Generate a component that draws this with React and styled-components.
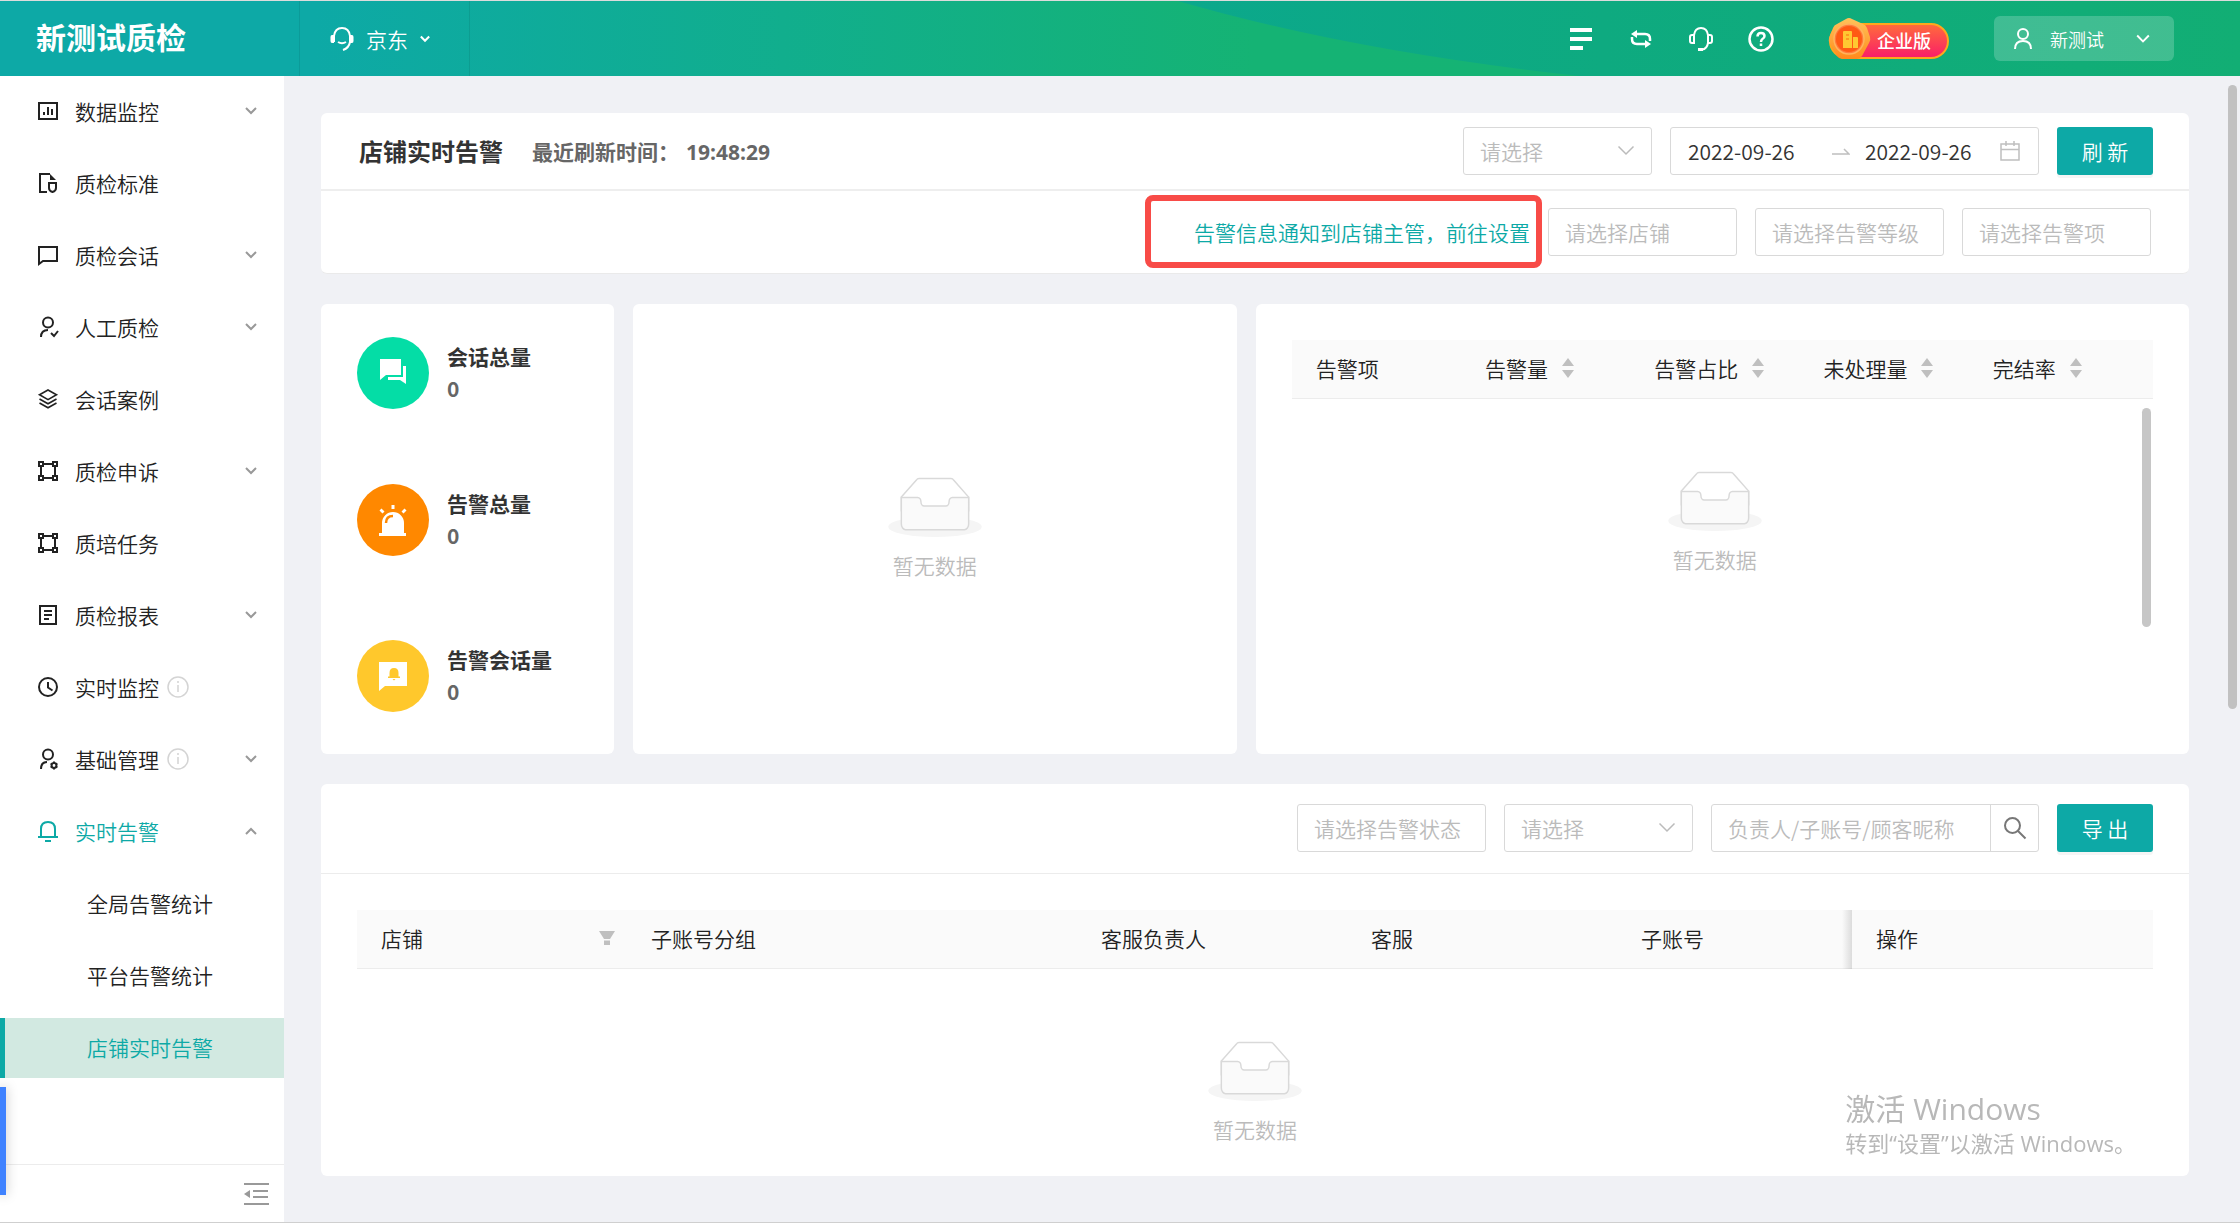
import React from "react";
import styled, { createGlobalStyle, css } from "styled-components";

const menuItems = [
  { icon: "chart", label: "数据监控", arrow: "down" },
  { icon: "file", label: "质检标准" },
  { icon: "chat", label: "质检会话", arrow: "down" },
  { icon: "userCheck", label: "人工质检", arrow: "down" },
  { icon: "layers", label: "会话案例" },
  { icon: "frame", label: "质检申诉", arrow: "down" },
  { icon: "frame", label: "质培任务" },
  { icon: "report", label: "质检报表", arrow: "down" },
  { icon: "clock", label: "实时监控", info: true },
  { icon: "userGear", label: "基础管理", info: true, arrow: "down" },
  { icon: "bell", label: "实时告警", arrow: "up", open: true },
];

const subItems = ["全局告警统计", "平台告警统计", "店铺实时告警"];

const stats = [
  { icon: "talk", label: "会话总量", value: 0, color: "#04dda6" },
  { icon: "siren", label: "告警总量", value: 0, color: "#ff8800" },
  { icon: "notice", label: "告警会话量", value: 0, color: "#ffc82c" },
];

const alarmColumns = ["告警项", "告警量", "告警占比", "未处理量", "完结率"];

const detailColumns = [
  { label: "店铺", width: 270, filter: true },
  { label: "子账号分组", width: 450 },
  { label: "客服负责人", width: 270 },
  { label: "客服", width: 270 },
  { label: "子账号", width: 235 },
];

const menuIcons = {
  chart: <path d="M1 2h18v16H1zM6 14v-3M10 14V6M14 14V8" />,
  file: (
    <>
      <path d="M9 19H2V1h10" />
      <path d="M12 1v6h6z" fill="currentColor" stroke="none" />
      <path d="M11 10h7v5q0 3-3.500 4-3.500-1-3.500-4z" />
    </>
  ),
  chat: <path d="M1 2h18v14H5l-4 3z" />,
  userCheck: (
    <>
      <circle cx="10" cy="5.500" r="5" />
      <path d="M3 20q0-7 7-7M13 16l3 3 4-5" />
    </>
  ),
  layers: (
    <path strokeWidth="1.600" d="M10 1l8.500 4.800L10 10.600 1.500 5.800zM1.500 10L10 14.800 18.500 10M1.500 14L10 18.800 18.500 14" />
  ),
  frame: (
    <path d="M1 1h4v4H1zM15 1h4v4h-4zM1 15h4v4H1zM15 15h4v4h-4zM5 3h10M5 17h10M3 5v10M17 5v10" />
  ),
  report: <path d="M2 1h16v18H2zM6 6h8M6 10h8M6 14h5" />,
  clock: (
    <>
      <circle cx="10" cy="10" r="9" />
      <path d="M10 5v5.500l4.500 3" />
    </>
  ),
  userGear: (
    <>
      <circle cx="10" cy="5.500" r="5" />
      <path d="M3 20q0-7 6-7" />
      <circle cx="16" cy="16.500" r="2.400" />
      <path d="M16 12.500v1.500M16 19v1.500M12.600 14.500l1.200.700M18.200 17.800l1.200.700M12.600 18.500l1.200-.700M18.200 15.200l1.200-.700" />
    </>
  ),
  bell: <path d="M0 16h20M3 16V8q0-7 7-7t7 7v8M7 20h6" />,
};

const statIcons = {
  talk: (
    <>
      <path d="M1 1h21v16H7l-6 5z" />
      <path d="M24 8h3v18l-6-4H9v-3h15z" />
    </>
  ),
  siren: (
    <>
      <path d="M3 28V18a11 11 0 0 1 22 0v10h2v3H0v-3z" />
      <path d="M12.500 0h3v4h-3zM.5 5.500l2-2 3 3-2 2zM27.500 5.500l-2-2-3 3 2 2z" />
      <path d="M7 18q0-7 7-7" fill="none" stroke="#ff8800" strokeWidth="2.500" />
    </>
  ),
  notice: (
    <>
      <path d="M0 1h28v24H6l-6 5z" />
      <path d="M9 17h12v-1.500h-1.500V12q0-5-4.500-5t-4.500 5v3.500H9zM13.500 18h3l-1.500 1.500z" fill="#ffc82c" />
    </>
  ),
};

function Chevron({ up, size = 12, weight = 2 }) {
  return (
    <svg width={size} height={size} viewBox="0 0 12 12" fill="none" stroke="currentColor" strokeWidth={weight} aria-hidden="true">
      <path d={up ? "M1 9l5-5 5 5" : "M1 3l5 5 5-5"} />
    </svg>
  );
}

function Empty({ inTable }) {
  return (
    <EmptyBox $inTable={inTable}>
      <svg width="94" height="60" viewBox="0 0 64 41" aria-hidden="true">
        <g transform="translate(0 1)" fill="none" fillRule="evenodd">
          <ellipse fill="#f5f5f5" cx="32" cy="33" rx="32" ry="7" />
          <g fillRule="nonzero" stroke="#d9d9d9">
            <path d="M55 12.760L44.854 1.258C44.367.474 43.656 0 42.907 0H21.093c-.749 0-1.460.474-1.947 1.257L9 12.761V22h46v-9.240z" fill="#fff" />
            <path d="M41.613 15.931c0-1.605.994-2.930 2.227-2.931H55v18.137C55 33.260 53.680 35 52.050 35h-40.100C10.320 35 9 33.259 9 31.137V13h11.160c1.233 0 2.227 1.323 2.227 2.928v.022c0 1.605 1.005 2.901 2.237 2.901h14.752c1.232 0 2.237-1.308 2.237-2.913v-.007z" fill="#fafafa" />
          </g>
        </g>
      </svg>
      <EmptyText>暂无数据</EmptyText>
    </EmptyBox>
  );
}

function Picker({ label, arrow }) {
  return (
    <PickerBox>
      <PickerSelect aria-label={label} defaultValue="">
        <option value="">{label}</option>
      </PickerSelect>
      {arrow && (
        <PickerArrow>
          <Chevron size={18} weight={1} />
        </PickerArrow>
      )}
    </PickerBox>
  );
}

function Header() {
  return (
    <TopBar>
      <TopBarArt viewBox="0 0 2240 75" preserveAspectRatio="none" aria-hidden="true">
        <defs>
          <linearGradient id="wave" x1="0" x2="1" y1="0" y2="0">
            <stop offset="0" stopColor="#0ba88c" />
            <stop offset="0.4" stopColor="#0eaa80" />
            <stop offset="1" stopColor="#12ae74" />
          </linearGradient>
        </defs>
        <path d="M1178 0Q1350 50 1580 75H2240V0z" fill="url(#wave)" />
      </TopBarArt>
      <Brand>新测试质检</Brand>
      <Platform>
        <svg width="24" height="24" viewBox="0 0 24 24" fill="none" stroke="currentColor" strokeWidth="2" aria-hidden="true">
          <path d="M4 15V9q1-8 8-8t8 8v6q-1 6-7 8M8 15q4 2.500 8 0" />
          <path d="M4 8v8H2q-1.500 0-1.500-2v-4Q.5 8 2 8zM20 8v8h2q1.500 0 1.500-2v-4q0-2-1.500-2z" fill="currentColor" stroke="none" />
        </svg>
        京东
        <Chevron size={10} weight={2.5} />
      </Platform>
      <Tools>
        <ToolButton aria-label="列表">
          <svg width="22" height="24" viewBox="0 0 22 24" stroke="currentColor" strokeWidth="4" aria-hidden="true">
            <path d="M0 3h22M0 12h22M0 21h13" />
          </svg>
        </ToolButton>
        <ToolButton aria-label="切换">
          <svg width="22" height="20" viewBox="0 0 22 20" fill="none" stroke="currentColor" strokeWidth="2.500" aria-hidden="true">
            <path d="M4 5h11q5 0 5 5v2M18 15H7q-5 0-5-5V8" />
            <path d="M7 1v8L1 5zM15 11v8l6-4z" fill="currentColor" stroke="none" />
          </svg>
        </ToolButton>
        <ToolButton aria-label="客服">
          <svg width="24" height="24" viewBox="0 0 24 24" fill="none" stroke="currentColor" strokeWidth="2" aria-hidden="true">
            <path d="M5 8q1-7 7-7t7 7v8q-1 6-6 6.500" />
            <path d="M5 8v8H3q-2 0-2-2v-4q0-2 2-2zM19 8v8h2q2 0 2-2v-4q0-2-2-2z" />
            <path d="M9 22.500h5" strokeWidth="3" />
          </svg>
        </ToolButton>
        <ToolButton aria-label="帮助">
          <svg width="26" height="26" viewBox="0 0 26 26" fill="none" stroke="currentColor" strokeWidth="2.500" aria-hidden="true">
            <circle cx="13" cy="13" r="11.500" />
            <path d="M9.500 10.500q0-3.500 3.500-3.500t3.500 3q0 2-2 3-1.500 1-1.500 3M13 17.500v2.500" />
          </svg>
        </ToolButton>
      </Tools>
      <Edition>
        <EditionMedal viewBox="0 0 44 44" aria-hidden="true">
          <defs>
            <linearGradient id="medal" x1="0" x2="0" y1="0" y2="1">
              <stop offset="0" stopColor="#ffc35a" />
              <stop offset="1" stopColor="#ff8a1c" />
            </linearGradient>
          </defs>
          <path d="M18 2q3-2 6 0l11 5q3 1 4 4l3 9q1 3-1 6l-7 13q-2 3-5 3H14q-3 0-5-3L2 27q-2-3-1-6l4-10q1-3 4-4z" fill="url(#medal)" />
          <circle cx="21" cy="22" r="15" fill="#ff7a3c" stroke="#ffb45c" strokeWidth="1.500" />
          <circle cx="21" cy="22" r="13" fill="#ff5a14" />
          <path d="M15 15q0-1 1-1h7q1 0 1 1v16h-9zM25 20h4q1 0 1 1v10h-5z" fill="#ffc832" />
          <path d="M18 18h3M18 22h3" stroke="#ff8a1c" strokeWidth="1.500" />
        </EditionMedal>
        企业版
      </Edition>
      <Account>
        <svg width="18" height="22" viewBox="0 0 18 22" fill="none" stroke="currentColor" strokeWidth="2" aria-hidden="true">
          <circle cx="9" cy="6" r="5" />
          <path d="M1 21q0-8 8-8t8 8" />
        </svg>
        <AccountName>新测试</AccountName>
        <Chevron size={14} weight={1.6} />
      </Account>
    </TopBar>
  );
}

function Sidebar() {
  return (
    <Side>
      <Nav>
        {menuItems.map((item) => (
          <NavItem key={item.label} href="#" $open={item.open}>
            <NavIcon viewBox="0 0 20 20">{menuIcons[item.icon]}</NavIcon>
            {item.label}
            {item.info && (
              <InfoIcon viewBox="0 0 22 22">
                <circle cx="11" cy="11" r="10" />
                <path d="M11 9v7M11 5v2" />
              </InfoIcon>
            )}
            {item.arrow && (
              <NavArrow>
                <Chevron up={item.arrow === "up"} />
              </NavArrow>
            )}
          </NavItem>
        ))}
        {subItems.map((label, index) => (
          <SubItem key={label} href="#" $active={index === 2}>
            {label}
          </SubItem>
        ))}
      </Nav>
      <SideFooter>
        <FoldButton aria-label="收起菜单">
          <svg width="25" height="22" viewBox="0 0 25 22" fill="none" stroke="currentColor" strokeWidth="2" aria-hidden="true">
            <path d="M0 1h25M9 8h15M9 14h15M0 21h25" />
            <path d="M6 7v8l-6-4z" fill="currentColor" stroke="none" />
          </svg>
        </FoldButton>
      </SideFooter>
    </Side>
  );
}

function AlarmTable() {
  return (
    <AlarmBody>
      <Table>
        <thead>
          <tr>
            {alarmColumns.map((label, index) => (
              <Th key={label}>
                <ThContent>
                  {label}
                  {index > 0 && (
                    <svg width="12" height="20" viewBox="0 0 12 20" fill="#bfbfbf" aria-hidden="true">
                      <path d="M6 0l6 8H0zM6 20l6-8H0z" />
                    </svg>
                  )}
                </ThContent>
              </Th>
            ))}
            <ThGutter />
          </tr>
        </thead>
        <tbody>
          <tr>
            <Td colSpan={5}>
              <Empty inTable />
            </Td>
            <TdGutter>
              <InnerThumb />
            </TdGutter>
          </tr>
        </tbody>
      </Table>
    </AlarmBody>
  );
}

function DetailTable() {
  return (
    <DetailBody>
      <Table>
        <thead>
          <tr>
            {detailColumns.map((col) => (
              <Th key={col.label} $width={col.width}>
                <ThContent $spread={col.filter}>
                  {col.label}
                  {col.filter && (
                    <svg width="16" height="16" viewBox="0 0 16 16" fill="#bfbfbf" aria-hidden="true">
                      <path d="M0 1h16l-5 8H5zM5 10.500h6V15H5z" />
                    </svg>
                  )}
                </ThContent>
              </Th>
            ))}
            <FixedTh>操作</FixedTh>
          </tr>
        </thead>
        <tbody>
          <tr>
            <Td colSpan={6}>
              <Empty inTable />
            </Td>
          </tr>
        </tbody>
      </Table>
    </DetailBody>
  );
}

export default function App() {
  return (
    <Page>
      <GlobalStyle />
      <Header />
      <Body>
        <Sidebar />
        <Main>
          <FilterCard>
            <TitleRow>
              <Title>店铺实时告警</Title>
              <Refreshed>
                最近刷新时间：<Time>19:48:29</Time>
              </Refreshed>
              <Picker label="请选择" arrow />
              <DateRange>
                <DateInput aria-label="开始日期" defaultValue="2022-09-26" />
                <svg width="18" height="18" viewBox="0 0 18 18" fill="none" stroke="#bfbfbf" strokeWidth="1.500" aria-hidden="true">
                  <path d="M0 12h17l-5-5" />
                </svg>
                <DateInput aria-label="结束日期" defaultValue="2022-09-26" />
                <svg width="20" height="20" viewBox="0 0 20 20" fill="none" stroke="#bfbfbf" strokeWidth="1.500" aria-hidden="true">
                  <path d="M1 3h18v16H1zM1 8.500h18M6 0v5M14 0v5" />
                </svg>
              </DateRange>
              <PrimaryButton>刷 新</PrimaryButton>
            </TitleRow>
            <FilterRow>
              <SettingLink href="#">告警信息通知到店铺主管，前往设置</SettingLink>
              <Picker label="请选择店铺" />
              <Picker label="请选择告警等级" />
              <Picker label="请选择告警项" />
            </FilterRow>
          </FilterCard>
          <Overview>
            <StatCard>
              {stats.map((stat) => (
                <Stat key={stat.label}>
                  <StatCircle $color={stat.color}>
                    <svg width="28" height="31" viewBox="0 0 28 31" fill="#fff" aria-hidden="true">
                      {statIcons[stat.icon]}
                    </svg>
                  </StatCircle>
                  <StatText>
                    <StatLabel>{stat.label}</StatLabel>
                    <StatValue>{stat.value}</StatValue>
                  </StatText>
                </Stat>
              ))}
            </StatCard>
            <ChartCard>
              <Empty />
            </ChartCard>
            <Card>
              <AlarmTable />
            </Card>
          </Overview>
          <Card>
            <DetailBar>
              <Picker label="请选择告警状态" />
              <Picker label="请选择" arrow />
              <Search>
                <SearchInput aria-label="搜索" placeholder="负责人/子账号/顾客昵称" />
                <SearchButton aria-label="搜索">
                  <svg width="24" height="24" viewBox="0 0 24 24" fill="none" stroke="#777" strokeWidth="2" aria-hidden="true">
                    <circle cx="9.500" cy="9.500" r="7.500" />
                    <path d="M15 15l7.500 7.500" />
                  </svg>
                </SearchButton>
              </Search>
              <PrimaryButton>导 出</PrimaryButton>
            </DetailBar>
            <DetailTable />
          </Card>
        </Main>
        <ScrollTrack>
          <ScrollThumb />
        </ScrollTrack>
      </Body>
      <Drawer />
      <Watermark>
        <WatermarkTitle>激活 Windows</WatermarkTitle>
        <WatermarkText>转到“设置”以激活 Windows。</WatermarkText>
      </Watermark>
    </Page>
  );
}

const GlobalStyle = createGlobalStyle`
  * {
    box-sizing: border-box;
  }
  body {
    margin: 0;
    font-family: "Noto Sans CJK SC", sans-serif;
    font-size: 21px;
    font-weight: 350;
    line-height: 32px;
    color: #222;
  }
  button, input, select {
    font: inherit;
    color: inherit;
    margin: 0;
  }
  button {
    cursor: pointer;
  }
  a {
    text-decoration: none;
  }
  svg {
    display: block;
    flex-shrink: 0;
  }
`;

const Page = styled.div`
  display: flex;
  flex-direction: column;
  min-height: 100vh;
  background-color: #f0f1f5;
  border-top: 1px solid #dcdcdc;
  border-bottom: 1px solid #cfcfcf;
`;

const TopBar = styled.header`
  position: relative;
  display: flex;
  align-items: center;
  height: 75px;
  padding-right: 66px;
  color: #fff;
  background: linear-gradient(90deg, #0da9a6 0%, #0da9a6 14%, #15b374 56%, #16b374 100%);
`;

const TopBarArt = styled.svg`
  position: absolute;
  top: 0;
  left: 0;
  width: 100%;
  height: 100%;
`;

const Brand = styled.h1`
  position: relative;
  width: 299px;
  margin: 0;
  padding: 0 0 6px 36px;
  font-size: 30px;
  font-weight: bold;
`;

const Platform = styled.div`
  position: relative;
  display: flex;
  align-items: center;
  gap: 12px;
  width: 171px;
  height: 100%;
  padding-left: 30px;
  border: 1px solid rgba(0, 0, 0, 0.08);
  border-width: 0 1px;
`;

const Tools = styled.div`
  position: relative;
  display: flex;
  margin-left: auto;
  margin-right: 38px;
`;

const ToolButton = styled.button`
  display: flex;
  align-items: center;
  justify-content: center;
  width: 60px;
  height: 45px;
  padding: 0;
  border: none;
  background: none;
`;

const Edition = styled.div`
  position: relative;
  width: 120px;
  height: 36px;
  margin: 4px 45px 0 0;
  padding-left: 46px;
  border: 2px solid #ffa81c;
  border-radius: 18px;
  background: linear-gradient(180deg, #ff6a3c, #fa1f68);
  font-size: 18px;
  font-weight: 500;
  line-height: 30px;
`;

const EditionMedal = styled.svg`
  position: absolute;
  top: -8px;
  left: -3px;
  width: 44px;
  height: 44px;
`;

const Account = styled.button`
  position: relative;
  display: flex;
  align-items: center;
  width: 180px;
  height: 45px;
  padding: 0 24px 0 20px;
  border: none;
  border-radius: 6px;
  background-color: rgba(255, 255, 255, 0.2);
  font-size: 18px;
`;

const AccountName = styled.span`
  flex: 1;
  padding-left: 18px;
  text-align: left;
`;

const Body = styled.div`
  display: flex;
  flex: 1;
`;

const Side = styled.aside`
  display: flex;
  flex-direction: column;
  flex-shrink: 0;
  width: 284px;
  background-color: #fff;
`;

const Nav = styled.nav`
  display: flex;
  flex-direction: column;
  flex: 1;
  gap: 12px;
  padding-top: 6px;
`;

const NavItem = styled.a`
  display: flex;
  align-items: center;
  height: 60px;
  padding: 0 27px 2px 38px;
  color: ${({ $open }) => ($open ? "#0da9a6" : "#222")};
`;

const NavIcon = styled.svg`
  width: 20px;
  height: 20px;
  margin-right: 17px;
  overflow: visible;
  fill: none;
  stroke: currentColor;
  stroke-width: 2;
`;

const InfoIcon = styled.svg`
  width: 22px;
  height: 22px;
  margin-left: 8px;
  fill: none;
  stroke: #d4d4d4;
  stroke-width: 1.5;
`;

const NavArrow = styled.span`
  margin-left: auto;
  color: #999;
`;

const SubItem = styled.a`
  display: flex;
  align-items: center;
  height: 60px;
  padding: 0 0 2px 82px;
  border-left: 5px solid ${({ $active }) => ($active ? "#0da9a6" : "transparent")};
  background-color: ${({ $active }) => ($active ? "#d2e9e1" : "transparent")};
  color: ${({ $active }) => ($active ? "#0da9a6" : "#222")};
`;

const SideFooter = styled.div`
  display: flex;
  align-items: center;
  justify-content: flex-end;
  height: 58px;
  padding-right: 15px;
  border-top: 1px solid #ececec;
`;

const FoldButton = styled.button`
  padding: 0;
  border: none;
  background: none;
  color: #999;
`;

const Main = styled.main`
  flex: 1;
  min-width: 0;
  padding: 37px 39px 30px 37px;
`;

const Card = styled.section`
  border-radius: 6px;
  background-color: #fff;
`;

const FilterCard = styled(Card)`
  border-bottom: 1px solid #eaeaea;
`;

const TitleRow = styled.div`
  display: flex;
  align-items: center;
  gap: 18px;
  height: 78px;
  padding: 0 36px 0 38px;
  border-bottom: 2px solid #eee;
`;

const Title = styled.h2`
  margin: 0;
  font-size: 24px;
  font-weight: bold;
  color: #333;
`;

const Refreshed = styled.div`
  flex: 1;
  padding-left: 11px;
  font-weight: bold;
  color: #666;
`;

const Time = styled.span`
  padding-left: 7px;
  font-family: "Open Sans", sans-serif;
`;

const FilterRow = styled.div`
  display: flex;
  align-items: center;
  justify-content: flex-end;
  gap: 18px;
  height: 82px;
  padding-right: 38px;
`;

// the red frame hangs over the row around the link
const SettingLink = styled.a`
  position: relative;
  color: #0da9a6;

  &::after {
    content: "";
    position: absolute;
    inset: -21px -12px -20px -49px;
    border: 6px solid #f84b47;
    border-radius: 8px;
  }
`;

const field = css`
  height: 48px;
  border: 1px solid #d9d9d9;
  border-radius: 3px;
  background-color: #fff;
`;

const PickerBox = styled.div`
  position: relative;
  width: 189px;
`;

const PickerSelect = styled.select`
  ${field}
  display: block;
  width: 100%;
  padding: 0 16px;
  appearance: none;
  color: #bbb;
`;

const PickerArrow = styled.span`
  position: absolute;
  top: 15px;
  right: 17px;
  color: #bbb;
  pointer-events: none;
`;

const DateRange = styled.div`
  ${field}
  display: flex;
  align-items: center;
  width: 369px;
  padding: 0 18px 0 17px;
`;

const DateInput = styled.input`
  flex: none;
  width: 144px;
  padding: 0;
  border: none;
  outline: none;
  background: none;
  color: #333;

  svg + & {
    flex: 1;
    min-width: 0;
    padding-left: 15px;
  }
`;

const PrimaryButton = styled.button`
  width: 96px;
  height: 48px;
  padding: 0;
  border: none;
  border-radius: 3px;
  background-color: #0da9a6;
  box-shadow: 0 3px 0 rgba(0, 0, 0, 0.04);
  color: #fff;
`;

const Overview = styled.div`
  display: grid;
  grid-template-columns: 16fr 33fr 51fr;
  gap: 19px;
  margin: 30px 0;
`;

const StatCard = styled(Card)`
  display: grid;
  grid-template-rows: 138px 156px 156px;
  padding-left: 36px;
`;

const Stat = styled.div`
  display: flex;
  align-items: center;
  gap: 18px;
`;

const StatCircle = styled.div`
  display: flex;
  align-items: center;
  justify-content: center;
  flex-shrink: 0;
  width: 72px;
  height: 72px;
  border-radius: 50%;
  background-color: ${({ $color }) => $color};
`;

const StatText = styled.div`
  padding-bottom: 2px;
  font-weight: bold;
`;

const StatLabel = styled.div`
  color: #333;
`;

const StatValue = styled.div`
  color: #666;
`;

const ChartCard = styled(Card)`
  display: flex;
  align-items: center;
  justify-content: center;
`;

const AlarmBody = styled.div`
  padding: 36px;
`;

const DetailBody = styled.div`
  padding: 36px 36px 0;
`;

const Table = styled.table`
  width: 100%;
  table-layout: fixed;
  border-collapse: separate;
  border-spacing: 0;
`;

const Th = styled.th`
  width: ${({ $width }) => ($width ? `${$width}px` : "auto")};
  height: 59px;
  padding: 0 24px 2px;
  border-bottom: 1px solid #ececec;
  background-color: #fafafa;
  font-weight: inherit;
  text-align: left;
  white-space: nowrap;
`;

const ThContent = styled.div`
  display: flex;
  align-items: center;
  justify-content: ${({ $spread }) => ($spread ? "space-between" : "flex-start")};
  gap: 14px;
  margin-right: ${({ $spread }) => ($spread ? "-12px" : "0")};
`;

const ThGutter = styled(Th).attrs({ "aria-hidden": true })`
  width: 15px;
  padding: 0;
`;

const FixedTh = styled(Th)`
  position: relative;

  &::before {
    content: "";
    position: absolute;
    top: 0;
    bottom: -1px;
    left: -10px;
    width: 10px;
    background: linear-gradient(90deg, rgba(0, 0, 0, 0), rgba(0, 0, 0, 0.12));
  }
`;

const Td = styled.td`
  padding: 0;
  vertical-align: top;
`;

const TdGutter = styled(Td)`
  padding: 9px 2px 0 4px;
`;

const InnerThumb = styled.div`
  width: 9px;
  height: 219px;
  border-radius: 5px;
  background-color: #c6c6c6;
`;

const EmptyBox = styled.div`
  display: flex;
  flex-direction: column;
  align-items: center;
  padding: ${({ $inTable }) => ($inTable ? "72px 0 31px" : "0")};
`;

const EmptyText = styled.p`
  margin: 12px 0 0;
  color: #bbb;
`;

const DetailBar = styled.div`
  display: flex;
  align-items: center;
  justify-content: flex-end;
  gap: 18px;
  height: 90px;
  padding: 0 36px 1px 0;
  border-bottom: 1px solid #ececec;
`;

const Search = styled.div`
  ${field}
  display: flex;
  width: 328px;
`;

const SearchInput = styled.input`
  flex: 1;
  min-width: 0;
  padding: 0 16px;
  border: none;
  outline: none;
  background: none;

  &::placeholder {
    color: #bbb;
  }
`;

const SearchButton = styled.button`
  display: flex;
  align-items: center;
  justify-content: center;
  width: 48px;
  padding: 0;
  border: none;
  border-left: 1px solid #d9d9d9;
  background: none;
`;

const ScrollTrack = styled.div`
  width: 12px;
  padding-top: 9px;
`;

const ScrollThumb = styled.div`
  width: 9px;
  height: 51vh;
  border-radius: 5px;
  background-color: #c1c1c1;
`;

const Drawer = styled.div`
  position: fixed;
  left: 0;
  bottom: 28px;
  width: 6px;
  height: 108px;
  background-color: #3f82ff;
  box-shadow: 0 0 12px rgba(0, 0, 0, 0.25);
`;

const Watermark = styled.div`
  position: fixed;
  right: 104px;
  bottom: 64px;
  font-family: "Open Sans", "Noto Sans CJK SC", sans-serif;
  font-weight: 400;
  color: #b8b8b8;
`;

const WatermarkTitle = styled.div`
  font-size: 30px;
  line-height: 36px;
`;

const WatermarkText = styled.div`
  font-size: 22px;
`;
